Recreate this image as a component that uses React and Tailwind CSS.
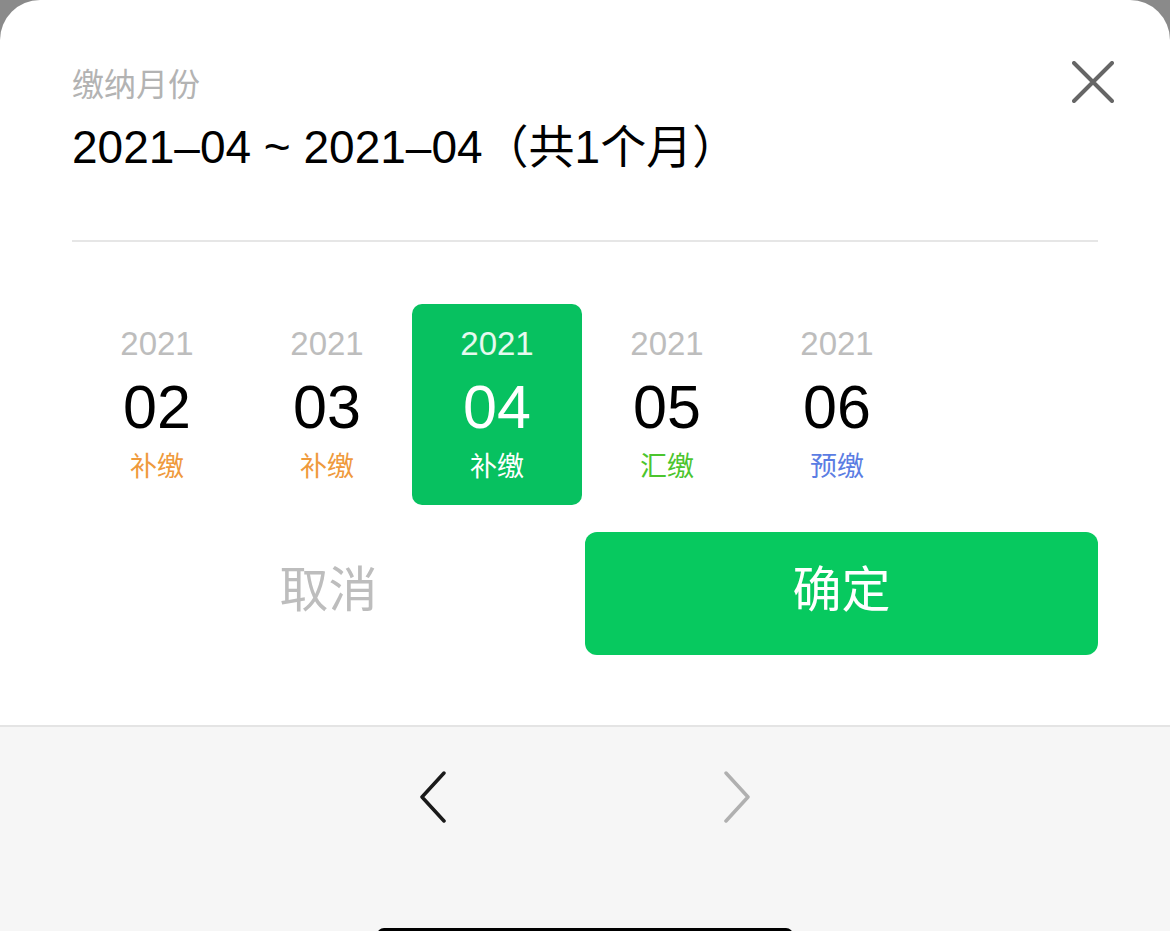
import React from "react";

const FONT = {
  fontFamily: '"Liberation Sans", "Noto Sans CJK SC", sans-serif',
};

const MONTHS = [
  { year: "2021", month: "02", tag: "补缴", tagColor: "text-[#ef9a3c]" },
  { year: "2021", month: "03", tag: "补缴", tagColor: "text-[#ef9a3c]" },
  { year: "2021", month: "04", tag: "补缴", tagColor: "text-white", active: true },
  { year: "2021", month: "05", tag: "汇缴", tagColor: "text-[#4cc52e]" },
  { year: "2021", month: "06", tag: "预缴", tagColor: "text-[#5b7de3]" },
];

function MonthCell({ item }) {
  return (
    <div
      className={`flex h-[201px] flex-col items-center pt-[22px] ${
        item.active ? "rounded-[10px] bg-[#07c160]" : ""
      }`}
    >
      <div
        className={`text-[33px] leading-[36px] ${
          item.active ? "text-white/90" : "text-[#bdbdbd]"
        }`}
      >
        {item.year}
      </div>
      <div
        className={`mt-[13px] text-[61px] leading-[64px] ${
          item.active ? "text-white" : "text-black"
        }`}
      >
        {item.month}
      </div>
      <div className={`mt-[12px] text-[27px] leading-[32px] ${item.tagColor}`}>
        {item.tag}
      </div>
    </div>
  );
}

export default function App() {
  return (
    <div
      className="relative h-[931px] w-[1170px] overflow-hidden bg-[#8a8a8a]"
      style={FONT}
    >
      <div className="flex h-full flex-col overflow-hidden rounded-t-[40px] bg-white">
        <div className="relative px-[72px]">
          <div className="pt-[67px] text-[32px] leading-[36px] text-[#b3b3b3]">
            缴纳月份
          </div>
          <div className="mt-[16px] text-[46px] leading-[56px] text-black">
            2021–04 ~ 2021–04（共1个月）
          </div>
          <button className="absolute right-[56px] top-[61px] h-[42px] w-[42px]" aria-label="关闭">
            <svg viewBox="0 0 42 42" className="h-full w-full">
              <path
                d="M2 2 L40 40 M40 2 L2 40"
                stroke="#666"
                strokeWidth="4"
                strokeLinecap="round"
              />
            </svg>
          </button>
          <div className="mt-[65px] h-[2px] bg-[#e6e6e6]" />

          <div className="mt-[62px] grid grid-cols-[repeat(6,170px)]">
            {MONTHS.map((m) => (
              <MonthCell key={m.month} item={m} />
            ))}
          </div>

          <div className="mt-[27px] grid grid-cols-2">
            <button className="flex h-[123px] items-center justify-center pb-[6px] text-[49px] text-[#bdbdbd]">
              取消
            </button>
            <button className="flex h-[123px] items-center justify-center rounded-[12px] bg-[#07c95f] pb-[6px] text-[49px] text-white">
              确定
            </button>
          </div>
        </div>

        <div className="mt-[70px] flex-1 border-t-2 border-[#e4e4e4] bg-[#f6f6f6]">
          <div className="flex items-center justify-center gap-[276px] pt-[44px]">
            <svg viewBox="0 0 28 52" className="h-[52px] w-[28px]">
              <polyline
                points="25,2 3,26 25,50"
                fill="none"
                stroke="#1a1a1a"
                strokeWidth="3.5"
                strokeLinecap="round"
                strokeLinejoin="round"
              />
            </svg>
            <svg viewBox="0 0 28 52" className="h-[52px] w-[28px]">
              <polyline
                points="3,2 25,26 3,50"
                fill="none"
                stroke="#b0b0b0"
                strokeWidth="3.5"
                strokeLinecap="round"
                strokeLinejoin="round"
              />
            </svg>
          </div>
        </div>
      </div>
      <div className="absolute left-[377px] top-[928px] h-[14px] w-[416px] rounded-full bg-black" />
    </div>
  );
}
